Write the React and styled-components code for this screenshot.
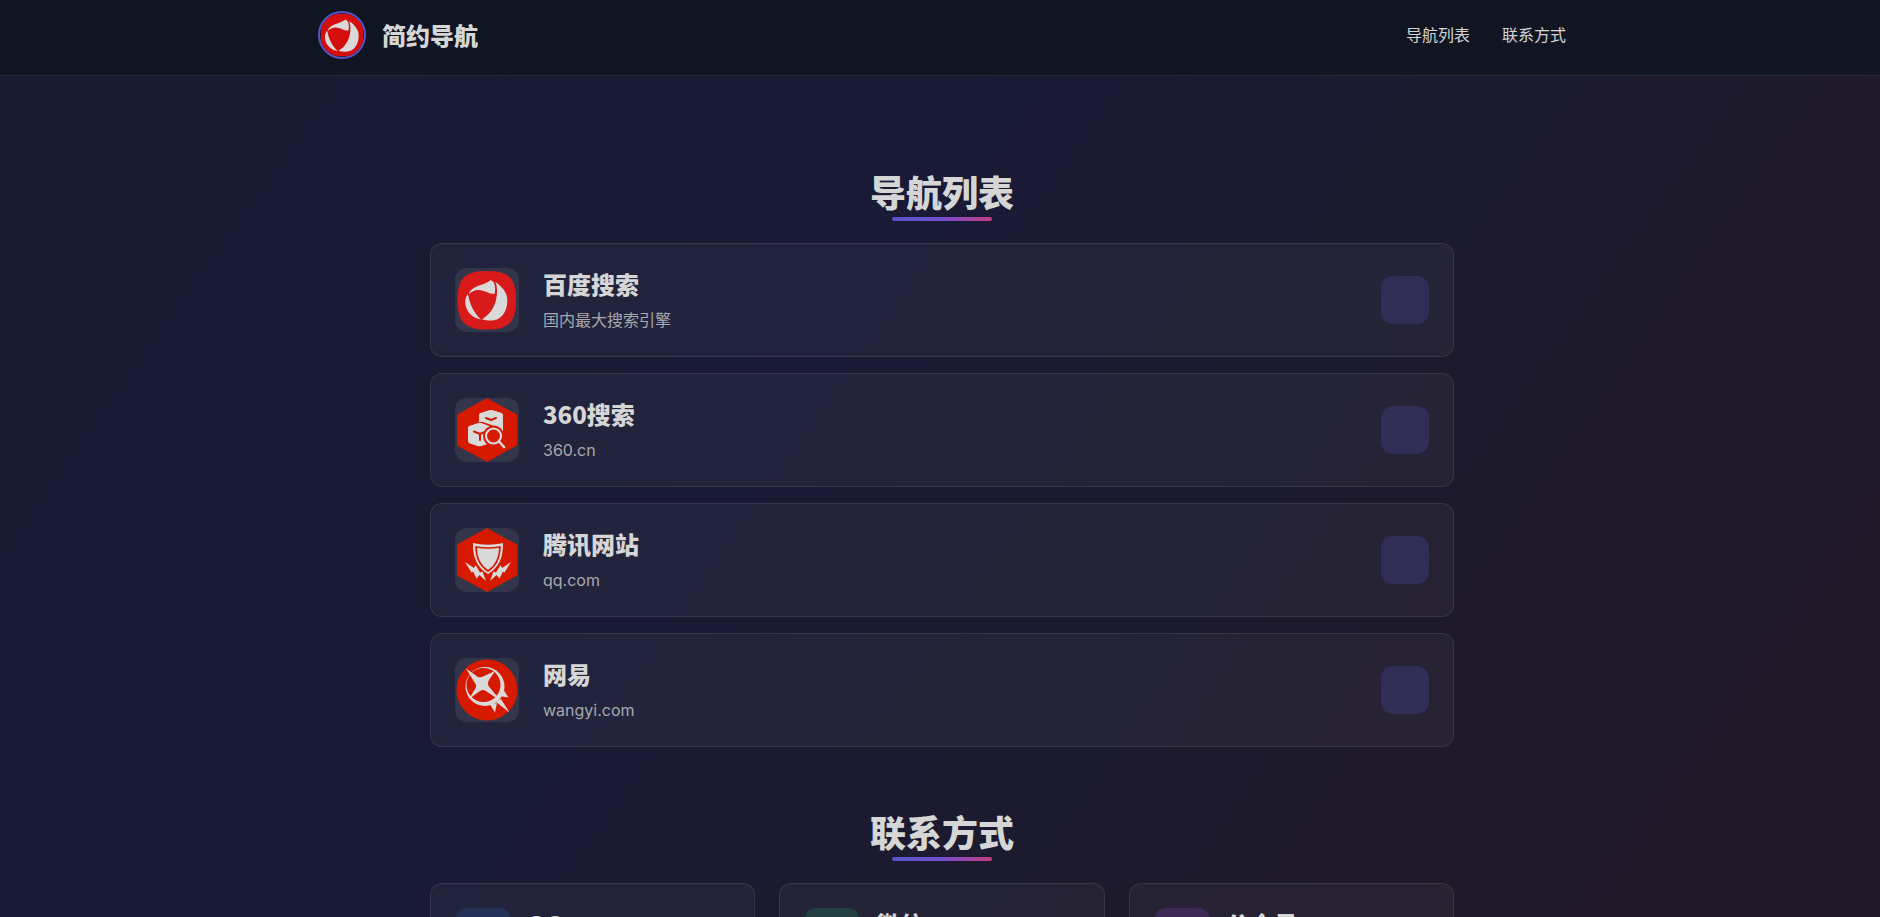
import React from 'react';
import styled, { createGlobalStyle } from 'styled-components';

const GlobalStyle = createGlobalStyle`
  *, *::before, *::after {
    box-sizing: border-box;
  }

  body {
    margin: 0;
    background: linear-gradient(125deg, #161c32 0%, #191a35 42%, #1c1a2e 65%, #231826 100%) fixed;
    color: #d6d6d6;
    font-family: Inter, "Noto Sans CJK SC", sans-serif;
    font-size: 16px;
    line-height: 24px;
  }

  h1, h2, h3, p {
    margin: 0;
  }

  a {
    color: inherit;
    text-decoration: none;
  }
`;

const Header = styled.header`
  background: linear-gradient(90deg, #0f1522, #121522);
  border-bottom: 1px solid #272a35;
`;

const HeaderInner = styled.div`
  display: flex;
  align-items: center;
  justify-content: space-between;
  max-width: 1284px;
  margin: 0 auto;
  padding: 11px 16px 16px 20px;
`;

const Brand = styled.a`
  display: flex;
  align-items: center;
  gap: 16px;
`;

const BrandLogo = styled.span`
  display: flex;
  width: 48px;
  height: 48px;
  border: 2px solid #5356ca;
  border-radius: 50%;
  overflow: hidden;
`;

const BrandName = styled.span`
  font-family: "Noto Sans CJK SC", sans-serif;
  font-size: 24px;
  line-height: 32px;
  font-weight: 900;
`;

const Nav = styled.nav`
  display: flex;
  gap: 32px;
`;

const Main = styled.main`
  max-width: 1060px;
  margin: 0 auto;
  padding: 93px 16px 48px 20px;
`;

const Section = styled.section`
  margin-bottom: 62px;
`;

const SectionTitle = styled.h2`
  display: flex;
  flex-direction: column;
  align-items: center;
  gap: 4px;
  margin-bottom: 22px;
  font-family: "Noto Sans CJK SC", sans-serif;
  font-size: 36px;
  line-height: 44px;
  font-weight: 900;

  &::after {
    content: '';
    width: 100px;
    height: 4px;
    border-radius: 2px;
    background: linear-gradient(90deg, #5356ca, #744dce, #c63c80);
  }
`;

const SiteList = styled.div`
  display: flex;
  flex-direction: column;
  gap: 16px;
`;

const Card = styled.article`
  display: flex;
  align-items: ${(props) => props.$align || 'center'};
  gap: ${(props) => props.$gap || 24}px;
  padding: 24px;
  border: 1px solid rgba(214, 214, 214, 0.1);
  border-radius: 12px;
  background: rgba(214, 214, 214, 0.05);
`;

const SiteIcon = styled.div`
  width: 64px;
  height: 64px;
  border-radius: 12px;
  background: rgba(214, 214, 214, 0.1);
  overflow: hidden;
`;

const SiteText = styled.div`
  flex: 1;
`;

const CardTitle = styled.h3`
  font-family: "Noto Sans CJK SC", sans-serif;
  font-size: 24px;
  line-height: 32px;
  font-weight: 900;
`;

const CardDesc = styled.p`
  margin-top: 8px;
  color: #a7a9af;
`;

const GoLink = styled.a`
  width: 48px;
  height: 48px;
  border-radius: 12px;
  background: #302e56;
`;

const ContactGrid = styled.div`
  display: grid;
  grid-template-columns: repeat(3, 1fr);
  gap: 24px;
`;

const ContactIcon = styled.div`
  width: 56px;
  height: 56px;
  border-radius: 12px;
  background: ${(props) => props.$color};
`;

const Svg = styled.svg`
  display: block;
  width: 100%;
  height: 100%;
`;

const Ribbon = () => (
  <g fill="#d9d9d9">
    <path d="M14 25C18 17 28 18 36 12c1 1 2 1.500 3 3 1.500 4 1.500 7 .5 11-6 0-10-4-16-4-4 0-7 2-9.500 4Z" />
    <path d="M40.500 14C46 18 51 23 52 29c1.500 9-2 18-9 22-5 2-11 2-16 .3C35 46 39 40 41 32c1.500-6 1.500-13-.5-18Z" />
    <path d="M13 26c-2.500 3-3.500 7-2.300 12C12.500 45 18 50 26 51.500 19 45 15 37 13 26Z" />
  </g>
);

const BrandIcon = () => (
  <Svg viewBox="4 4 55 55" aria-hidden="true">
    <rect x="5" y="5" width="53" height="53" rx="18" fill="#d60d0d" />
    <Ribbon />
  </Svg>
);

const BaiduIcon = () => (
  <Svg viewBox="0 0 64 64" aria-hidden="true">
    <path
      fill="#d91a1a"
      d="M32 3C54 3 61 10 61 32S54 61.500 32 61.500 2.500 54 2.500 32 10 3 32 3Z"
    />
    <Ribbon />
  </Svg>
);

const SearchIcon = () => (
  <Svg viewBox="0 0 64 64" aria-hidden="true">
    <path fill="#d61a00" d="M32 0 62 16.500v31L32 64 2 47.500v-31Z" />
    <g fill="#d9d9d9">
      <path d="M24 17c0-1 .5-1.500 1.500-2L34 12.300q2-.6 4 0L46.500 15q1.500.6 1.500 2v18H38v-7.500L28 24l-4 0Z" />
      <path d="M13 30c0-1 .5-1.500 1.500-2L23 25q1.500-.5 3 0l10 3.500V45l-9.500 3q-2 .6-4 0L15 45.500q-2-.7-2-2.500Z" />
    </g>
    <path
      fill="none"
      stroke="#d61a00"
      strokeWidth="2"
      strokeLinecap="round"
      strokeLinejoin="round"
      d="m31 20 5 2 5-2M19 33.500l6 2.500 6-2.500M25 36v6"
    />
    <circle cx="38.500" cy="38" r="10.500" fill="#d61a00" />
    <circle cx="38.500" cy="38" r="7.500" fill="#d61a00" stroke="#d9d9d9" strokeWidth="2.200" />
    <path stroke="#d9d9d9" strokeWidth="2.600" strokeLinecap="round" d="m44 43.500 5 5.500" />
  </Svg>
);

const ShieldIcon = () => (
  <Svg viewBox="0 0 64 64" aria-hidden="true">
    <path fill="#d61a00" d="M32 0 62 16.500v31L32 64 2 47.500v-31Z" />
    <path fill="#d9d9d9" d="M18 15c10 2.300 20 2.300 30 0 .3 13-3 24-15 31-12-7-15.300-18-15-31Z" />
    <path
      fill="none"
      stroke="#d61a00"
      strokeWidth="1.600"
      d="M21 19c8 1.400 16 1.400 24 0-.3 10-3 18.500-12 24-9-5.500-11.700-14-12-24Z"
    />
    <g fill="#d9d9d9">
      <path d="m10 34 9 6 1.500-3 4.500 7.500 2.500-1L31 53l-6.500-6-3 3.500-3.500-7-1.500 1Z" />
      <path d="m56 34-9 6-1.500-3-4.500 7.500-2.500-1L35 53l6.500-6 3 3.500 3.500-7 1.500 1Z" />
    </g>
  </Svg>
);

const StarIcon = () => (
  <Svg viewBox="0 0 64 64" aria-hidden="true">
    <circle cx="32" cy="32" r="30.500" fill="#d61a00" />
    <circle cx="30" cy="28.500" r="19.500" fill="#d9d9d9" />
    <circle cx="28.500" cy="27" r="17" fill="#d61a00" />
    <g fill="#d9d9d9">
      <path d="M11 10.500 23 19q3 1 6-1l11-5-6 9q-2 3-.5 6L46 43 30 32.500q-3-1-5 .5L14 41l6-10q2-3 .5-5Z" />
      <path d="m48 31 5.500 8.500L44 38ZM46 41l8.500 13.500L41 44ZM42 45l-2 9.500-5-8Z" />
    </g>
  </Svg>
);

const sites = [
  { name: '百度搜索', desc: '国内最大搜索引擎', Icon: BaiduIcon },
  { name: '360搜索', desc: '360.cn', Icon: SearchIcon },
  { name: '腾讯网站', desc: 'qq.com', Icon: ShieldIcon },
  { name: '网易', desc: 'wangyi.com', Icon: StarIcon },
];

const contacts = [
  { name: 'QQ', color: '#253257' },
  { name: '微信', color: '#233f3f' },
  { name: '公众号', color: '#3c2955' },
];

export default function App() {
  return (
    <>
      <GlobalStyle />
      <Header>
        <HeaderInner>
          <Brand href="#">
            <BrandLogo>
              <BrandIcon />
            </BrandLogo>
            <BrandName>简约导航</BrandName>
          </Brand>
          <Nav>
            <a href="#list">导航列表</a>
            <a href="#contact">联系方式</a>
          </Nav>
        </HeaderInner>
      </Header>
      <Main>
        <Section id="list">
          <SectionTitle>导航列表</SectionTitle>
          <SiteList>
            {sites.map(({ name, desc, Icon }) => (
              <Card key={name}>
                <SiteIcon>
                  <Icon />
                </SiteIcon>
                <SiteText>
                  <CardTitle>{name}</CardTitle>
                  <CardDesc>{desc}</CardDesc>
                </SiteText>
                <GoLink href="#" aria-label={name} />
              </Card>
            ))}
          </SiteList>
        </Section>
        <Section id="contact">
          <SectionTitle>联系方式</SectionTitle>
          <ContactGrid>
            {contacts.map(({ name, color }) => (
              <Card key={name} $gap={16} $align="flex-start">
                <ContactIcon $color={color} />
                <CardTitle>{name}</CardTitle>
              </Card>
            ))}
          </ContactGrid>
        </Section>
      </Main>
    </>
  );
}
